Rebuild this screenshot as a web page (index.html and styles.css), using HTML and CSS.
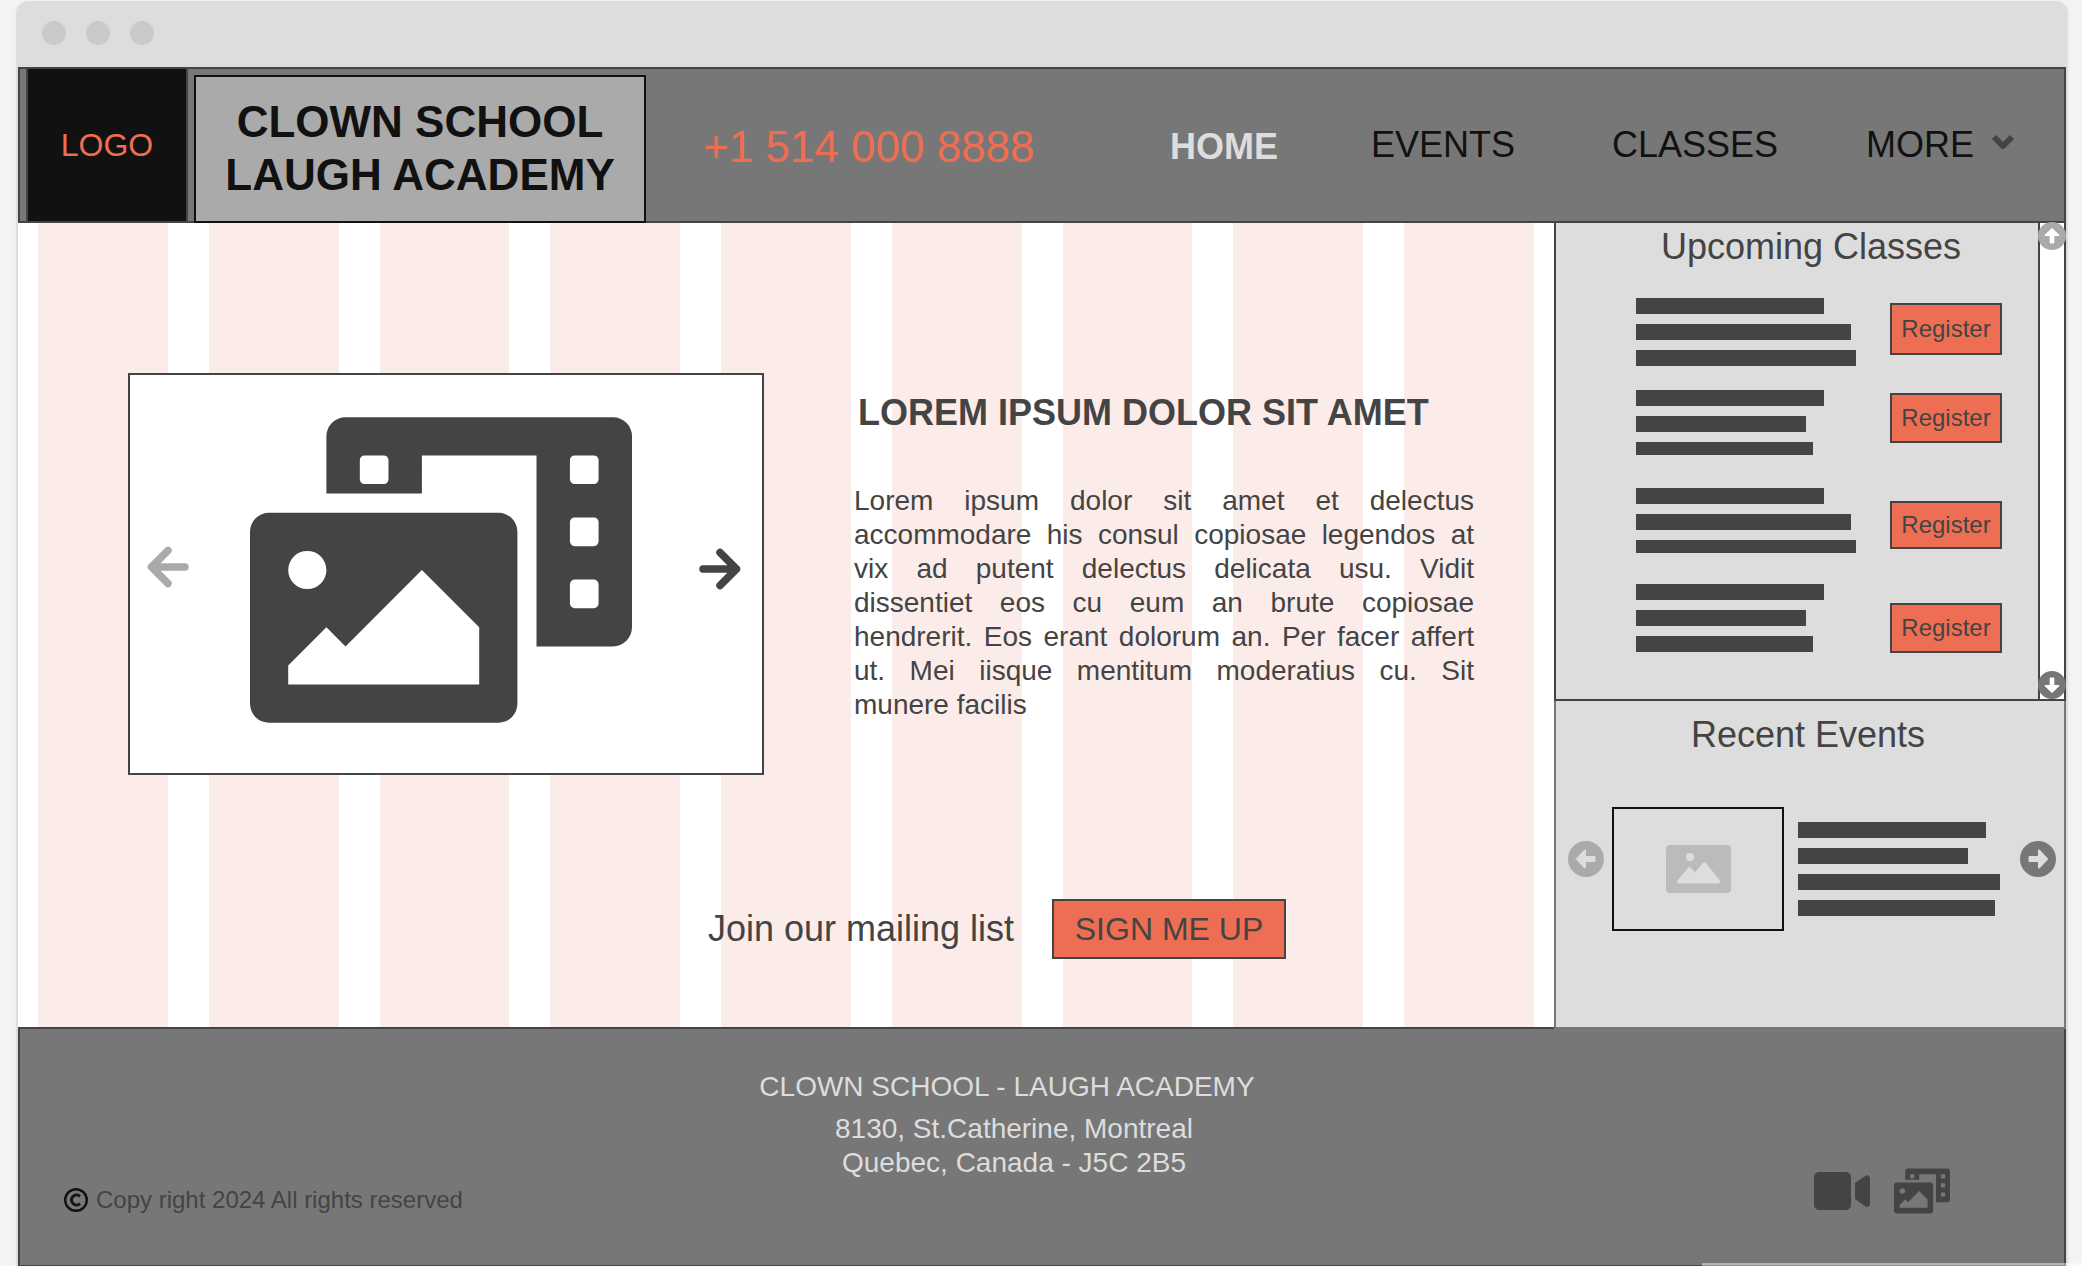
FILE: index.html
```html
<!DOCTYPE html>
<html lang="en">
<head>
<meta charset="utf-8">
<title>Clown School - Laugh Academy</title>
<link rel="stylesheet" href="styles.css">
</head>
<body>
<svg class="defs" aria-hidden="true">
  <symbol id="photo-film" viewBox="0 0 640 512">
    <path fill-rule="evenodd" d="M160 0H608a32 32 0 0 1 32 32V352a32 32 0 0 1-32 32H480V64H288V128H128V32a32 32 0 0 1 32-32ZM192 64a8 8 0 0 0-8 8v32a8 8 0 0 0 8 8h32a8 8 0 0 0 8-8V72a8 8 0 0 0-8-8ZM544 64a8 8 0 0 0-8 8v32a8 8 0 0 0 8 8h32a8 8 0 0 0 8-8V72a8 8 0 0 0-8-8ZM544 168a8 8 0 0 0-8 8v32a8 8 0 0 0 8 8h32a8 8 0 0 0 8-8v-32a8 8 0 0 0-8-8ZM544 272a8 8 0 0 0-8 8v32a8 8 0 0 0 8 8h32a8 8 0 0 0 8-8v-32a8 8 0 0 0-8-8Z"/>
    <path fill-rule="evenodd" d="M32 160H416a32 32 0 0 1 32 32V480a32 32 0 0 1-32 32H32a32 32 0 0 1-32-32V192a32 32 0 0 1 32-32ZM96 224a32 32 0 1 0 0 64a32 32 0 1 0 0-64ZM64 416V448H384V352L288 256L160 384L128 352Z"/>
  </symbol>
  <symbol id="arrow" viewBox="0 0 42 42">
    <path d="M4 21H37.500M21 4.500L37.500 21L21 37.500" fill="none" stroke="currentColor" stroke-width="7.500" stroke-linecap="round" stroke-linejoin="round"/>
  </symbol>
  <symbol id="circle-arrow" viewBox="0 0 36 36">
    <path fill-rule="evenodd" d="M18 0a18 18 0 1 0 0 36a18 18 0 1 0 0-36ZM9.500 15a1 1 0 0 0-1 1v4a1 1 0 0 0 1 1H18v5.500a1 1 0 0 0 1.700.7l8-8.400a1.200 1.200 0 0 0 0-1.600l-8-8.400a1 1 0 0 0-1.700.7V15Z"/>
  </symbol>
</svg>

<div class="frame">
  <div class="titlebar"><i class="dot"></i><i class="dot"></i><i class="dot"></i></div>

  <header class="header">
    <a class="logo" href="#">LOGO</a>
    <h1 class="brand">CLOWN SCHOOL<br>LAUGH ACADEMY</h1>
    <a class="phone" href="tel:+15140008888">+1 514 000 8888</a>
    <nav class="nav">
      <a class="nav-link current" href="#">HOME</a>
      <a class="nav-link" href="#">EVENTS</a>
      <a class="nav-link" href="#">CLASSES</a>
      <button class="nav-link more" type="button">MORE
        <svg class="chevron" viewBox="0 0 24 16" aria-hidden="true"><path d="M3 3L12 12L21 3" fill="none" stroke="currentColor" stroke-width="6" stroke-linejoin="round"/></svg>
      </button>
    </nav>
  </header>

  <div class="main">
    <main class="hero">
      <div class="stripes"><i></i><i></i><i></i><i></i><i></i><i></i><i></i><i></i><i></i></div>
      <div class="hero-content">
        <div class="feature">
          <section class="slider" aria-label="Gallery">
            <button class="icon-button prev" type="button" aria-label="Previous"><svg class="slide-arrow flip"><use href="#arrow"/></svg></button>
            <svg class="slide" aria-hidden="true"><use href="#photo-film"/></svg>
            <button class="icon-button next" type="button" aria-label="Next"><svg class="slide-arrow"><use href="#arrow"/></svg></button>
          </section>
          <article class="story">
            <h2>LOREM IPSUM DOLOR SIT AMET</h2>
            <p>Lorem ipsum dolor sit amet et delectus accommodare his consul copiosae legendos at vix&nbsp;ad putent delectus delicata usu. Vidit dissentiet eos cu eum an brute copiosae hendrerit. Eos erant dolorum an. Per facer affert ut.&nbsp;Mei iisque mentitum moderatius cu. Sit munere facilis</p>
          </article>
        </div>
        <div class="mailing">
          <span>Join our mailing list</span>
          <button class="signup" type="button">SIGN ME UP</button>
        </div>
      </div>
    </main>

    <aside class="sidebar">
      <section class="classes">
        <div class="classes-body">
          <h2>Upcoming Classes</h2>
          <ul class="class-list">
            <li><div class="lines"><i class="w188"></i><i class="w215"></i><i class="w220"></i></div><button class="register" type="button">Register</button></li>
            <li><div class="lines"><i class="w188"></i><i class="w170"></i><i class="w177 thin"></i></div><button class="register" type="button">Register</button></li>
            <li><div class="lines"><i class="w188"></i><i class="w215"></i><i class="w220 thin"></i></div><button class="register" type="button">Register</button></li>
            <li><div class="lines"><i class="w188"></i><i class="w170"></i><i class="w177"></i></div><button class="register" type="button">Register</button></li>
          </ul>
        </div>
        <div class="scrollbar">
          <button class="icon-button light" type="button" aria-label="Scroll up"><svg class="scroll-arrow up"><use href="#circle-arrow"/></svg></button>
          <button class="icon-button dark" type="button" aria-label="Scroll down"><svg class="scroll-arrow down"><use href="#circle-arrow"/></svg></button>
        </div>
      </section>

      <section class="events">
        <h2>Recent Events</h2>
        <div class="event-row">
          <button class="icon-button light" type="button" aria-label="Previous event"><svg class="event-arrow flip"><use href="#circle-arrow"/></svg></button>
          <div class="thumb">
            <svg viewBox="0 0 65 48" aria-hidden="true"><path fill-rule="evenodd" d="M4 0H61a4 4 0 0 1 4 4V44a4 4 0 0 1-4 4H4a4 4 0 0 1-4-4V4a4 4 0 0 1 4-4ZM24 8a4 4 0 1 0 0 8a4 4 0 1 0 0-8ZM13 38.500H52a2 2 0 0 0 1.700-3.200L39.700 17.800a1.600 1.600 0 0 0-2.600 0L29 27.500L24.800 22.800a1.600 1.600 0 0 0-2.600 0L11.700 35.300A2 2 0 0 0 13 38.500Z"/></svg>
          </div>
          <div class="lines"><i class="w188"></i><i class="w170"></i><i class="w202"></i><i class="w197"></i></div>
          <button class="icon-button dark last" type="button" aria-label="Next event"><svg class="event-arrow"><use href="#circle-arrow"/></svg></button>
        </div>
      </section>
    </aside>
  </div>

  <footer class="footer">
    <p class="copyright">
      <svg viewBox="0 0 24 24" aria-hidden="true"><g fill="none" stroke="currentColor"><circle cx="12" cy="12" r="10.800" stroke-width="2.400"/><path d="M16 8.400A5 5 0 1 0 16 15.600" stroke-width="3"/></g></svg>
      Copy right 2024 All rights reserved
    </p>
    <address class="address">
      <p>CLOWN SCHOOL - LAUGH ACADEMY</p>
      <p class="street">8130, St.Catherine, Montreal<br>Quebec, Canada - J5C 2B5</p>
    </address>
    <div class="media">
      <a href="#" aria-label="Videos"><svg class="video" viewBox="0 0 56 38"><path d="M5 0H32a5 5 0 0 1 5 5V33a5 5 0 0 1-5 5H5a5 5 0 0 1-5-5V5a5 5 0 0 1 5-5ZM41 11L51.500 3.700A3 3 0 0 1 56 6V32a3 3 0 0 1-4.500 2.600L41 27Z"/></svg></a>
      <a href="#" aria-label="Photos"><svg class="photos"><use href="#photo-film"/></svg></a>
    </div>
  </footer>
</div>
<div class="status"></div>
</body>
</html>
```
FILE: styles.css
```css
* {
  box-sizing: border-box;
}

body {
  margin: 0;
  background: #f4f4f4;
  color: #444;
  font-family: "Liberation Sans", Arial, sans-serif;
}

h1, h2, p, ul {
  margin: 0;
  padding: 0;
}

ul {
  list-style: none;
}

a {
  color: inherit;
  text-decoration: none;
}

button {
  margin: 0;
  padding: 0;
  border: 0;
  background: none;
  color: inherit;
  font: inherit;
}

svg {
  display: block;
  fill: currentColor;
}

h2 {
  font-size: 36px;
  line-height: 40px;
  font-weight: 400;
}

.defs {
  position: absolute;
  width: 0;
  height: 0;
}

.frame {
  display: flex;
  flex-direction: column;
  min-height: calc(100vh - 1px);
  margin: 1px 14px 0 16px;
  border: solid #ddd;
  border-width: 0 2px;
  border-radius: 12px 12px 0 0;
  background: #fff;
  box-shadow: 0 0 10px rgba(0, 0, 0, 0.03);
}

.titlebar {
  display: flex;
  align-items: center;
  gap: 20px;
  height: 66px;
  padding: 0 24px 2px;
  border-radius: 10px 10px 0 0;
  background: #ddd;
}

.dot {
  width: 24px;
  height: 24px;
  border-radius: 50%;
  background: #cacaca;
}

/* Header */

.header {
  display: flex;
  gap: 6px;
  height: 156px;
  padding-left: 6px;
  border: 2px solid #444;
  background: #777;
}

.logo {
  display: flex;
  align-items: center;
  justify-content: center;
  width: 162px;
  border: solid #444;
  border-width: 0 2px;
  background: #111;
  color: #ee6e53;
  font-size: 32px;
}

.brand {
  width: 452px;
  margin: 6px 0 -2px;
  padding-top: 18px;
  border: 2px solid #111;
  background: #aaa;
  color: #111;
  font-size: 44px;
  line-height: 53px;
  text-align: center;
}

.phone {
  align-self: center;
  margin-left: 51px;
  padding-top: 4px;
  color: #ee6e53;
  font-size: 44px;
  white-space: nowrap;
}

.nav {
  display: grid;
  grid-template-columns: 201fr 241fr 254fr 149fr;
  align-items: center;
  flex: 0 1 845px;
  margin: 0 49px 0 auto;
}

.nav-link {
  color: #111;
  font-size: 36px;
  white-space: nowrap;
}

.current {
  padding-top: 4px;
  color: #ddd;
  font-weight: 700;
}

.more {
  display: flex;
  align-items: center;
  justify-content: space-between;
}

.chevron {
  width: 24px;
  height: 16px;
  margin-bottom: 6px;
  color: #444;
}

/* Main area */

.main {
  display: grid;
  grid-template-columns: minmax(0, 1fr) 512px;
}

.hero {
  display: grid;
}

.stripes,
.hero-content {
  grid-area: 1 / 1;
}

.stripes {
  display: grid;
  grid-template-columns: repeat(9, 1fr);
  gap: 41px;
  padding: 0 20px;
}

.stripes i {
  background: #fcece9;
}

.hero-content {
  padding: 150px 80px 68px 110px;
}

.feature {
  display: grid;
  grid-template-columns: minmax(0, 636fr) minmax(0, 620fr);
  align-items: start;
  gap: 90px;
}

.slider {
  display: flex;
  align-items: center;
  padding: 42px 21px 50px 17px;
  border: 2px solid #444;
  background: #fff;
}

.prev {
  padding-bottom: 6px;
  color: #aaa;
}

.next {
  margin-left: auto;
  padding-bottom: 2px;
}

.slide-arrow {
  width: 42px;
  height: 42px;
}

.flip {
  transform: rotate(180deg);
}

.slide {
  width: 382px;
  height: 306px;
  margin-left: 61px;
}

.story {
  padding-top: 20px;
}

.story h2 {
  padding-left: 4px;
  font-weight: 700;
}

.story p {
  margin-top: 51px;
  font-size: 28px;
  line-height: 34px;
  text-align: justify;
}

.mailing {
  display: flex;
  align-items: center;
  justify-content: flex-end;
  gap: 38px;
  margin: 124px 188px 0 0;
  font-size: 36px;
}

.signup {
  width: 234px;
  height: 60px;
  border: 2px solid #444;
  background: #ee6e53;
  font-size: 32px;
}

/* Sidebar */

.sidebar {
  position: relative;
  display: flex;
  flex-direction: column;
  margin-bottom: -2px;
  background: #ddd;
}

.classes {
  display: flex;
  border: solid #444;
  border-width: 0 2px 2px;
}

.classes-body {
  flex: 1;
  padding-top: 4px;
}

.classes h2 {
  padding-left: 28px;
  text-align: center;
}

.class-list {
  padding: 31px 0 46px 80px;
}

.class-list li {
  display: grid;
  grid-template-columns: 254px 112px;
  align-items: start;
}

.class-list li:nth-child(1) {
  height: 92px;
}

.class-list li:nth-child(2) {
  height: 98px;
}

.class-list li:nth-child(3) {
  height: 96px;
}

.lines {
  display: grid;
  gap: 10px;
}

.lines i {
  height: 16px;
  background: #444;
}

.lines .thin { height: 13px; }
.w170 { width: 170px; }
.w177 { width: 177px; }
.w188 { width: 188px; }
.w197 { width: 197px; }
.w202 { width: 202px; }
.w215 { width: 215px; }
.w220 { width: 220px; }

.register {
  height: 50px;
  border: 2px solid #444;
  background: #ee6e53;
  font-size: 24px;
}

li:nth-child(1) .register {
  height: 52px;
  margin-top: 5px;
}

li:nth-child(2) .register {
  margin-top: 3px;
}

li:nth-child(3) .register {
  height: 48px;
  margin-top: 13px;
}

li:nth-child(4) .register {
  margin-top: 19px;
}

.scrollbar {
  display: flex;
  flex-direction: column;
  align-items: center;
  justify-content: space-between;
  width: 26px;
  border-left: 2px solid #444;
  background: #fff;
}

.scroll-arrow {
  width: 28px;
  height: 28px;
  margin: -1px -2px 0;
}

.up {
  transform: rotate(-90deg);
}

.down {
  transform: rotate(90deg);
}

.light {
  color: #aaa;
}

.dark {
  color: #777;
}

.events {
  padding: 14px 0 96px;
  border: solid #777;
  border-width: 0 2px 2px;
}

.events h2 {
  padding-right: 4px;
  text-align: center;
}

.event-row {
  display: flex;
  align-items: center;
  margin-top: 52px;
  padding: 0 8px 0 12px;
}

.event-arrow {
  width: 36px;
  height: 36px;
  margin-bottom: 20px;
}

.thumb {
  display: grid;
  place-items: center;
  width: 172px;
  height: 124px;
  margin: 0 14px 0 8px;
  border: 2px solid #111;
  color: #bbb;
}

.thumb svg {
  width: 65px;
  height: 48px;
}

.last {
  margin-left: auto;
}

/* Footer */

.footer {
  display: grid;
  grid-template-columns: 1fr auto 1fr;
  grid-template-rows: auto;
  align-content: start;
  align-items: end;
  flex: 1;
  padding: 41px 114px 48px 44px;
  border: 2px solid #444;
  border-bottom-width: 1px;
  background: #777;
}

.copyright {
  display: flex;
  align-items: center;
  gap: 8px;
  font-size: 24px;
  line-height: 28px;
}

.copyright svg {
  width: 24px;
  height: 24px;
  color: #111;
}

.address {
  padding-bottom: 34px;
  color: #ddd;
  font-size: 28px;
  font-style: normal;
  line-height: 34px;
  text-align: center;
}

.street {
  margin-top: 8px;
  padding-left: 14px;
}

.media {
  display: flex;
  align-items: center;
  justify-content: flex-end;
  gap: 24px;
}

.video {
  width: 56px;
  height: 38px;
}

.photos {
  width: 56px;
  height: 46px;
}

.status {
  position: fixed;
  right: 0;
  bottom: 0;
  width: 380px;
  height: 3px;
  background: rgba(255, 255, 255, 0.45);
}
```
